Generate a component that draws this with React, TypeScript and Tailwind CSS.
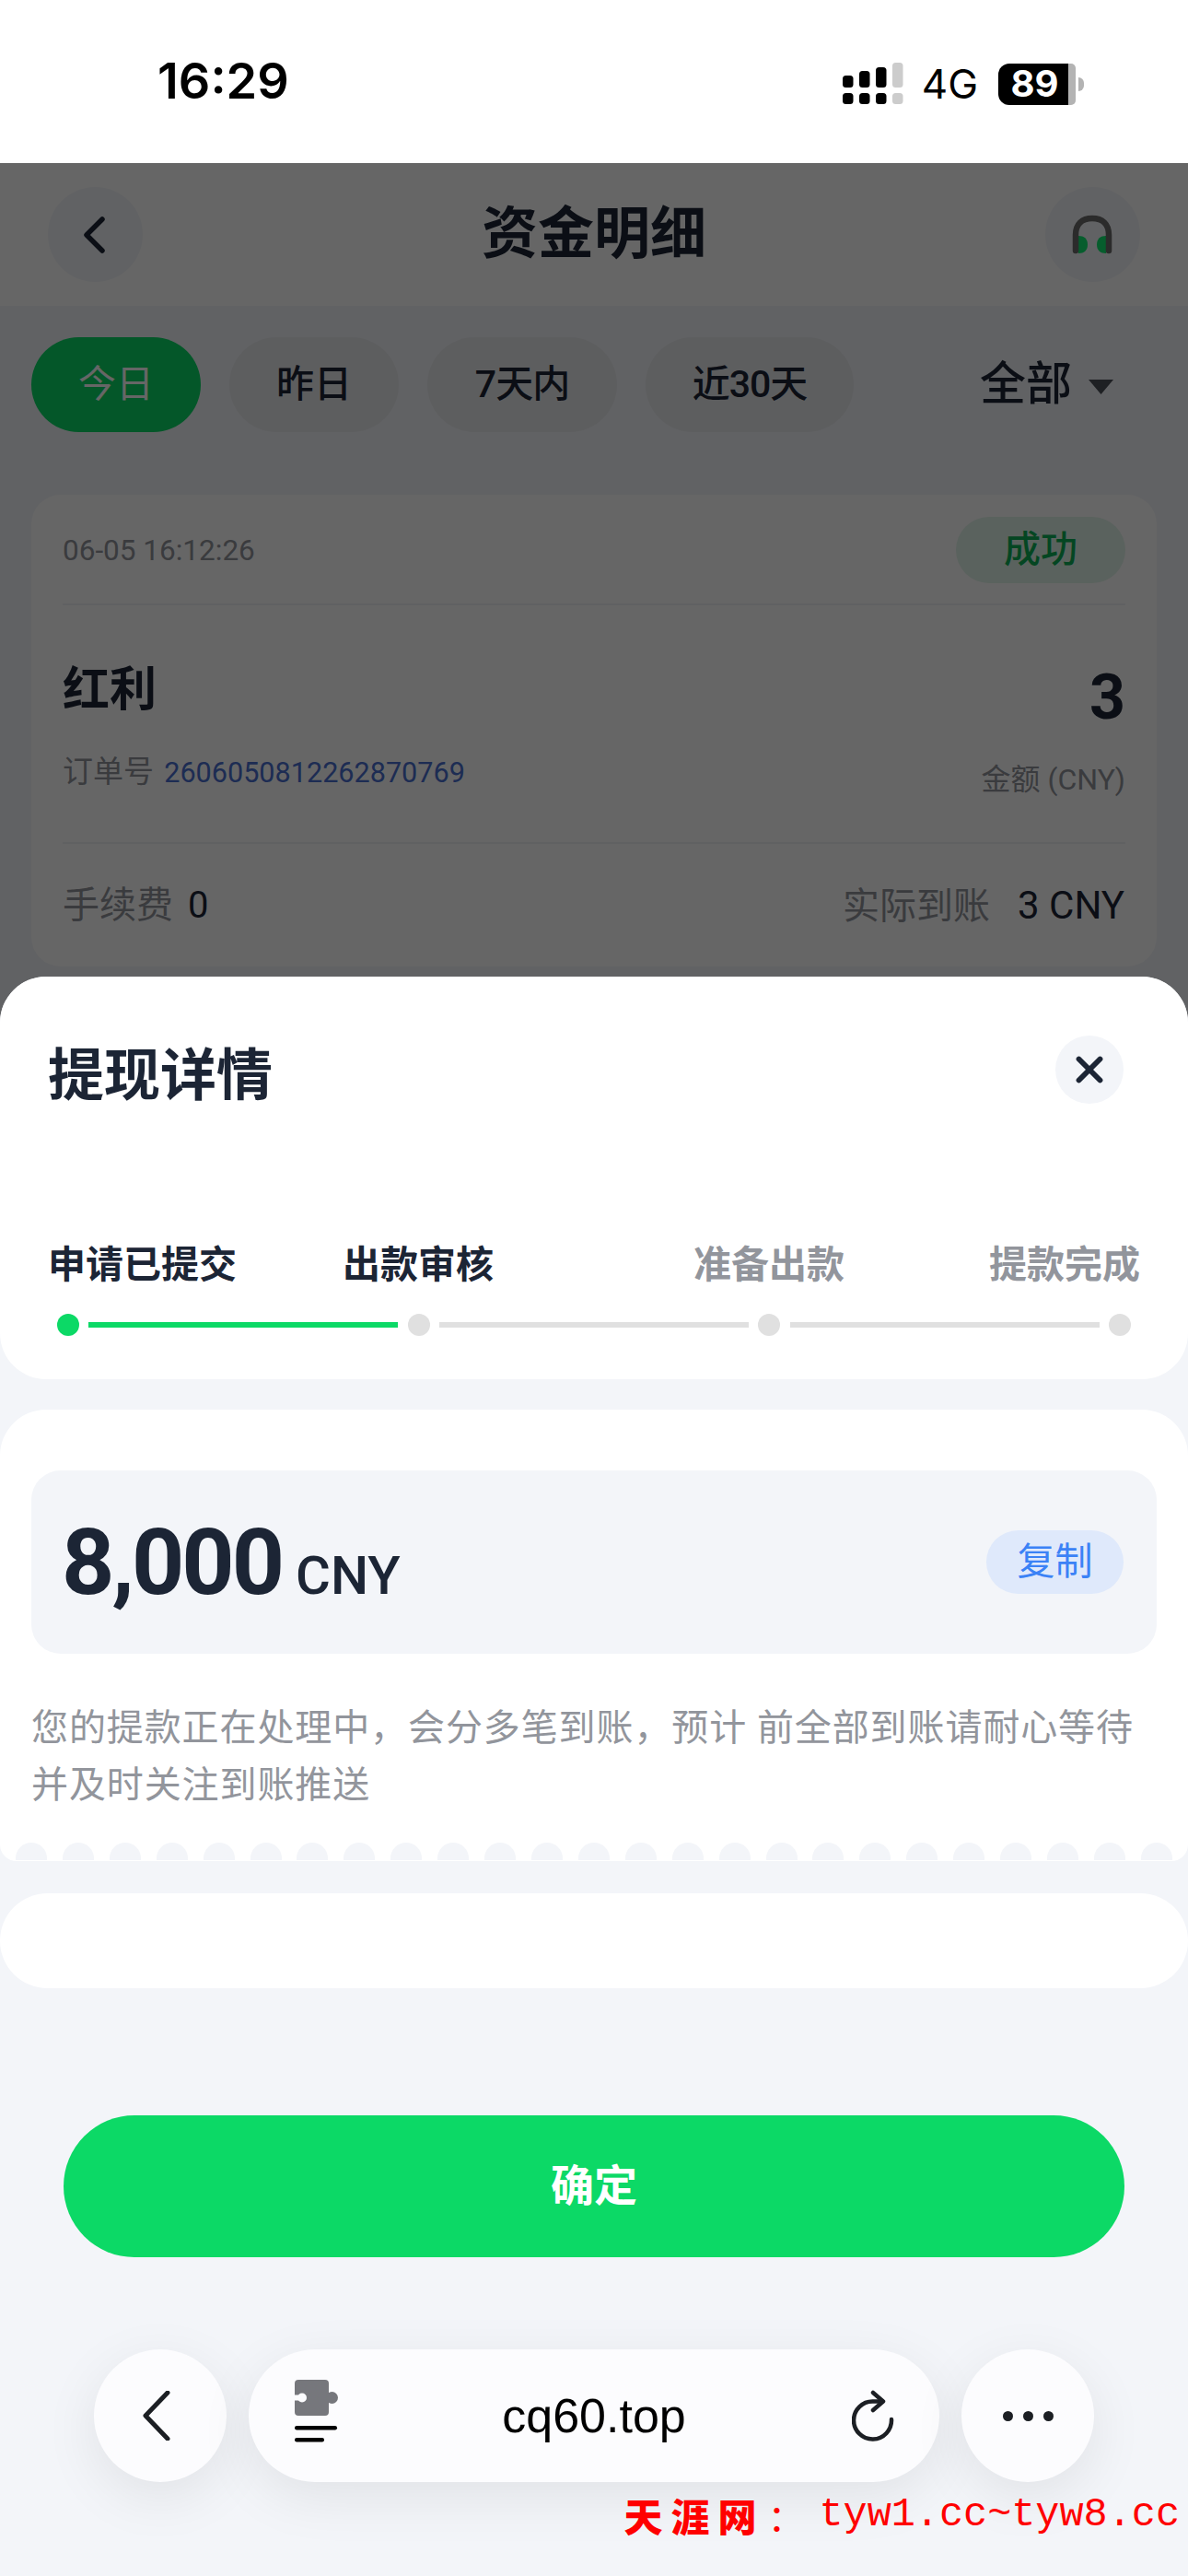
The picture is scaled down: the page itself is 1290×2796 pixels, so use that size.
import React from 'react';
import { X } from 'lucide-react';

const appFont = '"Roboto", "Noto Sans CJK SC", sans-serif';
const systemFont = '"Inter", "Noto Sans CJK SC", sans-serif';

const tabs = [
  { label: '今日', width: 'w-[184px]', active: true, tight: false },
  { label: '昨日', width: 'w-[184px]', active: false, tight: false },
  { label: '7天内', width: 'w-[206px]', active: false, tight: true },
  { label: '近30天', width: 'w-[226px]', active: false, tight: true },
];

const StatusBar = () => (
  <div
    className="h-[177px] bg-white flex items-start justify-between pl-[171px] pr-[113px] shrink-0"
    style={{ fontFamily: systemFont }}
  >
    <div className="mt-[58px] text-[54px] leading-[60px] font-semibold text-black">16:29</div>
    <div className="mt-[64px] flex items-center">
      <svg width="66" height="46" viewBox="0 0 66 46">
        <rect x="0" y="14" width="11.5" height="13" rx="3.5" fill="#000" />
        <rect x="0" y="33" width="11.5" height="12" rx="3.5" fill="#000" />
        <rect x="18" y="9" width="11.5" height="18" rx="3.5" fill="#000" />
        <rect x="18" y="33" width="11.5" height="12" rx="3.5" fill="#000" />
        <rect x="36" y="5" width="11.5" height="22" rx="3.5" fill="#000" />
        <rect x="36" y="33" width="11.5" height="12" rx="3.5" fill="#000" />
        <rect x="54" y="0" width="11.5" height="27" rx="3.5" fill="#ccc" />
        <rect x="54" y="33" width="11.5" height="12" rx="3.5" fill="#ccc" />
      </svg>
      <span className="ml-[20px] text-[44px] leading-[54px] text-black">4G</span>
      <div className="ml-[22px] flex items-center">
        <div className="w-[76px] h-[45px] rounded-l-[12px] bg-black flex items-center justify-center pl-[3px] text-[40px] leading-[54px] font-bold text-white">
          89
        </div>
        <div className="w-[8px] h-[45px] rounded-r-[5px] bg-[#b3b3b3]" />
        <div className="ml-[3px] w-[6px] h-[15px] rounded-r-full bg-[#b3b3b3]" />
      </div>
    </div>
  </div>
);

const BackgroundPage = () => (
  <div className="relative flex-1 bg-[#f3f5f9]">
    <div className="h-[155px] bg-white flex items-center justify-between px-[52px]">
      <div className="w-[103px] h-[103px] rounded-full bg-[#f3f5f9] flex items-center justify-center pr-[4px]">
        <svg width="26" height="40" viewBox="0 0 26 40">
          <path d="M22 3L5 20l17 17" fill="none" stroke="#1c2535" strokeWidth="5.5" strokeLinecap="round" strokeLinejoin="round" />
        </svg>
      </div>
      <h1 className="text-[61px] leading-[70px] font-bold text-[#1c2535] -mt-[1px]">资金明细</h1>
      <div className="w-[103px] h-[103px] rounded-full bg-[#f3f5f9] flex items-center justify-center">
        <svg width="44" height="44" viewBox="0 0 44 44">
          <path d="M7 23c6 0 10 3 10 9.500S13 42 7 42z" fill="#0fe870" />
          <path d="M37 23c-6 0-10 3-10 9.500S31 42 37 42z" fill="#0fe870" />
          <path d="M4 39V22C4 10 11 4 22 4s18 6 18 18v17" fill="none" stroke="#6b6b6b" strokeWidth="6.5" strokeLinecap="round" />
        </svg>
      </div>
    </div>

    <div className="flex items-center pl-[34px] pr-[81px] pt-[34px]">
      <div className="flex gap-[31px]">
        {tabs.map((tab) => (
          <div
            key={tab.label}
            className={`${tab.width} h-[103px] rounded-full flex items-center justify-center text-[41px] ${
              tab.active ? 'bg-[#0cd966] text-white font-normal' : 'bg-[#e8eaee] text-[#1c2535] font-medium'
            } ${tab.tight ? 'tracking-[-1px]' : ''}`}
          >
            {tab.label}
          </div>
        ))}
      </div>
      <div className="ml-auto flex items-center gap-[18px]">
        <span className="text-[50px] font-medium text-[#1c2535]">全部</span>
        <svg className="mt-[4px]" width="27" height="16" viewBox="0 0 27 16">
          <path d="M0 0h27L13.500 16z" fill="#4b5058" />
        </svg>
      </div>
    </div>

    <div className="mx-[34px] mt-[68px] h-[512px] rounded-[32px] bg-white px-[34px]">
      <div className="h-[120px] flex items-center justify-between border-b-2 border-[#f1f2f5]">
        <span className="mt-[4px] text-[31.5px] text-[#92959c]">06-05 16:12:26</span>
        <span className="w-[184px] h-[72px] mt-[2px] rounded-full bg-[#e2f4ea] flex items-center justify-center text-[40px] font-medium text-[#0cb055]">成功</span>
      </div>
      <div className="h-[259px] flex justify-between border-b-2 border-[#f1f2f5]">
        <div className="pt-[59px]">
          <div className="text-[51px] leading-[66px] font-bold text-[#1c2535]">红利</div>
          <div className="mt-[34px] text-[33px] leading-[44px] text-[#92959c]">
            订单号 <span className="ml-[3px] text-[30.6px] text-[#4a6fd0]">2606050812262870769</span>
          </div>
        </div>
        <div className="pt-[62px] text-right">
          <div className="text-[68px] leading-[76px] font-bold text-[#1c2535]">3</div>
          <div className="mt-[31px] text-[32px] leading-[40px] text-[#92959c]">金额 (CNY)</div>
        </div>
      </div>
      <div className="h-[133px] flex items-center justify-between text-[40px]">
        <div className="text-[#92959c]">手续费 <span className="ml-[6px] text-[#1c2535]">0</span></div>
        <div className="text-[#92959c] mr-[1px]">实际到账 <span className="ml-[20px] text-[42px] text-[#1c2535]">3 CNY</span></div>
      </div>
    </div>

    {/* dim layer behind the sheet */}
    <div className="absolute inset-0 bg-black/60" />
  </div>
);

const DetailSheet = () => (
  <div className="absolute inset-x-0 top-[1060px] bottom-0 bg-[#f3f5f9] rounded-t-[50px]">
    <div className="h-[437px] bg-white rounded-[50px] px-[52px] pt-[70px]">
      <div className="flex items-start justify-between pr-[18px]">
        <h2 className="text-[61px] leading-[76px] font-bold text-[#1c2535]">提现详情</h2>
        <div className="w-[74px] h-[74px] -mt-[6px] rounded-full bg-[#f3f5f9] flex items-center justify-center">
          <X className="w-[46px] h-[46px] text-[#1c2535]" strokeWidth={3} />
        </div>
      </div>
      <div className="mt-[139px] flex text-[41px] leading-[56px] font-bold">
        <span className="text-[#1c2535] w-[320px]">申请已提交</span>
        <span className="text-[#1c2535] w-[381px]">出款审核</span>
        <span className="text-[#92959c] w-[321px]">准备出款</span>
        <span className="text-[#92959c]">提款完成</span>
      </div>
      <div className="mt-[25px] ml-[10px] flex items-center w-[1166px]">
        <div className="w-[24px] h-[24px] rounded-full bg-[#0cd966]" />
        <div className="ml-[10px] w-[336px] h-[6px] bg-[#0cd966]" />
        <div className="ml-[11px] w-[24px] h-[24px] rounded-full bg-[#e0e0e0]" />
        <div className="ml-[10px] w-[336px] h-[6px] bg-[#e0e0e0]" />
        <div className="ml-[10px] w-[24px] h-[24px] rounded-full bg-[#e0e0e0]" />
        <div className="ml-[11px] w-[336px] h-[6px] bg-[#e0e0e0]" />
        <div className="ml-[10px] w-[24px] h-[24px] rounded-full bg-[#e0e0e0]" />
      </div>
    </div>

    <div className="mt-[33px] h-[490px] bg-white rounded-t-[50px] rounded-b-[18px] relative px-[34px] pt-[66px]">
      <div className="h-[199px] rounded-[32px] bg-[#f3f5f9] flex items-center justify-between pl-[33px] pr-[36px]">
        <div className="flex items-baseline gap-[15px] text-[#1c2535]">
          <span className="text-[100px] leading-[110px] font-bold tracking-[-3px]">8,000</span>
          <span className="text-[58px] leading-[60px] font-medium">CNY</span>
        </div>
        <div className="w-[149px] h-[69px] rounded-full bg-[#dfe9fb] flex items-center justify-center text-[41px] text-[#3b82f6]">复制</div>
      </div>
      <p className="mt-[50px] text-[40px] leading-[62px] text-[#92959c] tracking-[0.9px] w-[1225px]">
        您的提款正在处理中，会分多笔到账，预计 前全部到账请耐心等待并及时关注到账推送
      </p>
      <div className="absolute inset-x-0 bottom-[1px] px-[17px] flex justify-between">
        {Array.from({ length: 25 }).map((_, i) => (
          <div key={i} className="w-[34px] h-[19px] rounded-t-full bg-[#f3f5f9]" />
        ))}
      </div>
    </div>

    <div className="mt-[35px] h-[103px] rounded-full bg-white" />

    <div className="mt-[138px] mx-[69px] h-[154px] rounded-full bg-[#0cd966] flex items-center justify-center text-[47px] font-bold text-white">
      确定
    </div>

    <div className="mt-[100px] flex justify-center gap-[24px]">
      <div className="w-[144px] h-[144px] rounded-full bg-[#fcfcfe] shadow-[0_16px_60px_rgba(0,0,0,0.08)] flex items-center justify-center pr-[8px]">
        <svg width="32" height="54" viewBox="0 0 32 54">
          <path d="M28 2L4 27l24 25" fill="none" stroke="#1c1f24" strokeWidth="5" strokeLinecap="round" strokeLinejoin="round" />
        </svg>
      </div>
      <div className="w-[750px] h-[144px] rounded-full bg-[#fcfcfe] shadow-[0_16px_60px_rgba(0,0,0,0.08)] flex items-center justify-between pl-[50px] pr-[48px]">
        <svg className="mb-[11px]" width="48" height="68" viewBox="0 0 48 68">
          <rect x="0" y="0" width="37" height="39" rx="4" fill="#76777c" />
          <circle cx="40.500" cy="19.500" r="6.500" fill="#76777c" />
          <rect x="0" y="16.500" width="4" height="6" fill="#fcfcfe" />
          <circle cx="8" cy="19.500" r="5" fill="#fcfcfe" />
          <rect x="0" y="50" width="46" height="4.500" rx="2.200" fill="#000" />
          <rect x="0" y="63" width="32" height="4.500" rx="2.200" fill="#000" />
        </svg>
        <span className="mr-[3px] text-[52px] text-black" style={{ fontFamily: '"Liberation Sans", sans-serif' }}>cq60.top</span>
        <svg width="47" height="56" viewBox="0 0 47 56">
          <path d="M43 32A20.500 20.500 0 1 1 23 12.500H33" fill="none" stroke="#1c1f24" strokeWidth="4.500" strokeLinecap="round" />
          <path d="M23 3l11 9.500-11 9.500" fill="none" stroke="#1c1f24" strokeWidth="4.500" strokeLinecap="round" strokeLinejoin="round" />
        </svg>
      </div>
      <div className="w-[144px] h-[144px] rounded-full bg-[#fcfcfe] shadow-[0_16px_60px_rgba(0,0,0,0.08)] flex items-center justify-center gap-[11px]">
        <div className="w-[11px] h-[11px] rounded-full bg-[#1c1f24]" />
        <div className="w-[11px] h-[11px] rounded-full bg-[#1c1f24]" />
        <div className="w-[11px] h-[11px] rounded-full bg-[#1c1f24]" />
      </div>
    </div>
  </div>
);

export default function App() {
  return (
    <div className="relative w-[1290px] h-[2796px] overflow-hidden flex flex-col bg-[#f3f5f9]" style={{ fontFamily: appFont }}>
      <StatusBar />
      <BackgroundPage />
      <DetailSheet />
      <div className="absolute right-[9px] bottom-[38px] flex items-center text-[#ff0000]">
        <span className="text-[42px] leading-[56px] font-black tracking-[9px]" style={{ fontFamily: '"Noto Sans CJK SC", serif' }}>天涯网</span>
        <span className="ml-[3px] text-[40px] leading-[56px]" style={{ fontFamily: '"Noto Sans CJK SC", serif' }}>：</span>
        <span className="ml-[16px] text-[43.5px] leading-[56px]" style={{ fontFamily: '"Liberation Mono", monospace' }}>tyw1.cc~tyw8.cc</span>
      </div>
    </div>
  );
}
